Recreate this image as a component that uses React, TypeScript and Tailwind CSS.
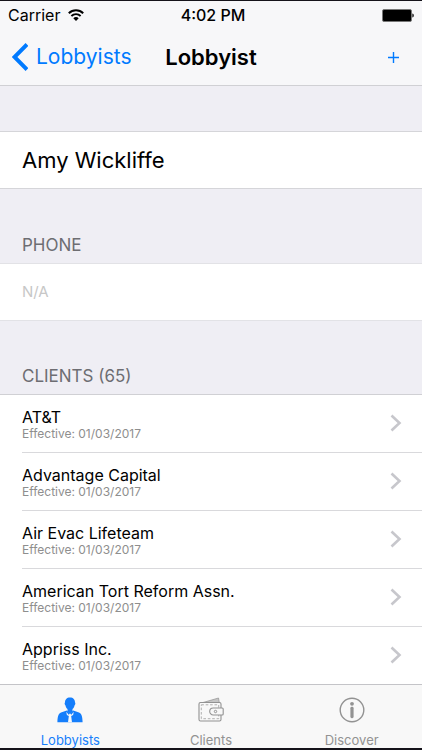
import { useState } from "react";
import type { ReactNode } from "react";

type Client = {
  name: string;
  effective: string;
};

const clients: Client[] = [
  { name: "AT&T", effective: "01/03/2017" },
  { name: "Advantage Capital", effective: "01/03/2017" },
  { name: "Air Evac Lifeteam", effective: "01/03/2017" },
  { name: "American Tort Reform Assn.", effective: "01/03/2017" },
  { name: "Appriss Inc.", effective: "01/03/2017" },
];

const WifiIcon = () => (
  <svg className="w-4 h-3" viewBox="0 0 16 12" fill="none" stroke="#000">
    <path d="M.8 4.3a10.3 10.3 0 0 1 14.4 0" strokeWidth="2" />
    <path d="M3.4 7a6.6 6.6 0 0 1 9.2 0" strokeWidth="1.9" />
    <path d="M8 12 5.3 9.2a3.9 3.9 0 0 1 5.4 0z" fill="#000" stroke="none" />
  </svg>
);

const BatteryIcon = () => (
  <svg className="w-8 h-[13px]" viewBox="0 0 32 13">
    <rect x=".5" y=".5" width="29" height="12" rx="1.5" fill="#000" stroke="#777" />
    <path d="M30.4 4.5c1.8.5 1.8 3.5 0 4z" fill="#000" />
  </svg>
);

const BackIcon = () => (
  <svg className="w-4 h-7" viewBox="0 0 16 28" fill="none">
    <path d="M15 1.5 2.5 14 15 26.5" stroke="#007aff" strokeWidth="4" />
  </svg>
);

const PlusIcon = () => (
  <svg className="w-3 h-3" viewBox="0 0 12 12" fill="none">
    <path d="M6.5 1v11M1 6.5h11" stroke="#007aff" strokeWidth="1.4" />
  </svg>
);

const ChevronIcon = () => (
  <svg className="w-3 h-[18px]" viewBox="0 0 12 18" fill="none">
    <path d="M1.5 1.5 9.5 9l-8 7.5" stroke="#c7c7cc" strokeWidth="2.6" />
  </svg>
);

const LobbyistIcon = () => (
  <svg className="w-[26px] h-[26px]" viewBox="0 0 26 26" fill="currentColor">
    <path d="M13 .5C9.8.5 7.9 2.6 8 5.6c-.7.3-.3 2.5.5 2.800.4 1.7 1.100 2.900 2 3.700v3l2.500 1.500 2.500-1.500v-3c.9-.8 1.600-2 2-3.700.8-.3 1.200-2.500.5-2.800.1-3-1.800-5.100-5-5.100z" />
    <path d="M9.8 13.500 4 15.400C1.700 16.200.6 18.500.4 25.200h25.200c-.2-6.700-1.300-9-3.600-9.800l-5.800-1.900L13 16.500z" />
    <path d="m9.300 14.700 2.300 3 1.400-1.200 1.400 1.200 2.300-3-.5 3.100-1.500 1.300-.6-.5.900 6.600h-4l.9-6.600-.6.500-1.500-1.300z" fill="#f8f8f8" />
  </svg>
);

const WalletIcon = () => (
  <svg className="w-[26px] h-[26px]" viewBox="0 0 26 26" fill="none" stroke="currentColor">
    <path d="M5 5.500 20.500 1l.8 4.500z" fill="currentColor" fillOpacity=".5" strokeWidth=".7" />
    <rect x="1" y="5.500" width="22" height="18.500" rx="1.500" strokeWidth="1.100" />
    <rect x="3.300" y="7.800" width="17.400" height="13.900" strokeWidth=".7" strokeDasharray="2.600 1.800" />
    <path d="M24.200 11h-9a3.500 3.500 0 0 0 0 7h9a1 1 0 0 0 1-1v-5a1 1 0 0 0-1-1z" fill="#f8f8f8" strokeWidth="1.100" />
    <circle cx="17.500" cy="14.500" r="1.200" />
  </svg>
);

const InfoIcon = () => (
  <svg className="w-[26px] h-[26px]" viewBox="0 0 26 26" fill="none">
    <circle cx="13" cy="13" r="11.800" stroke="currentColor" strokeWidth="1.400" />
    <circle cx="13" cy="6.800" r="1.900" fill="currentColor" />
    <rect x="11.400" y="9.800" width="3.200" height="11.400" rx="1.400" fill="currentColor" />
  </svg>
);

const tabs: { label: string; icon: ReactNode }[] = [
  { label: "Lobbyists", icon: <LobbyistIcon /> },
  { label: "Clients", icon: <WalletIcon /> },
  { label: "Discover", icon: <InfoIcon /> },
];

const SectionTitle = ({ children }: { children: ReactNode }) => (
  <h2 className="px-[22px] pb-1.5 text-[17px] leading-6 text-[#6d6d72]">
    {children}
  </h2>
);

const ClientRow = ({ name, effective }: Client) => (
  <li className="pl-[22px]">
    <button
      type="button"
      className="flex w-full h-[58px] items-center justify-between border-b border-[#d9d9dc] pr-5 pb-0.5 text-left"
    >
      <span className="flex flex-col pt-0.5">
        <span className="text-base leading-5 text-black">{name}</span>
        <span className="text-xs leading-[14px] text-[#8e8e8e]">
          Effective: {effective}
        </span>
      </span>
      <ChevronIcon />
    </button>
  </li>
);

const App = () => {
  const [activeTab, setActiveTab] = useState("Lobbyists");

  return (
    <div className="flex h-screen flex-col border-t border-b-2 border-[#15131a] bg-[#efeef4] font-['Inter','Liberation_Sans',sans-serif]">
      <header className="border-b border-[#d0d0d4] bg-[#f7f7f9]">
        <div className="grid h-7 grid-cols-[1fr_auto_1fr] items-center px-2 text-base text-black">
          <span className="flex items-center gap-2">
            Carrier
            <WifiIcon />
          </span>
          <span className="pl-1 font-medium">4:02 PM</span>
          <span className="flex justify-end">
            <BatteryIcon />
          </span>
        </div>
        <nav className="grid h-14 grid-cols-3 items-center">
          <button
            type="button"
            className="flex items-center gap-2 pl-3 text-[21px] text-[#007aff]"
          >
            <BackIcon />
            Lobbyists
          </button>
          <h1 className="text-center text-[22px] font-semibold text-black">
            Lobbyist
          </h1>
          <button
            type="button"
            aria-label="Add"
            className="justify-self-end py-2 pr-[23px]"
          >
            <PlusIcon />
          </button>
        </nav>
      </header>

      <main className="flex-1 overflow-hidden">
        <section className="mt-[45px] border-y border-[#d5d5d9] bg-white px-[22px]">
          <p className="text-[22px] leading-14 text-black">Amy Wickliffe</p>
        </section>

        <section className="pt-11">
          <SectionTitle>PHONE</SectionTitle>
          <p className="border-y border-[#e2e2e6] bg-white px-[22px] text-[15px] leading-14 text-[#c7c7c7]">
            N/A
          </p>
        </section>

        <section className="pt-[43px]">
          <SectionTitle>CLIENTS (65)</SectionTitle>
          <ul className="border-t border-[#d0d0d4] bg-white">
            {clients.map((client) => (
              <ClientRow key={client.name} {...client} />
            ))}
          </ul>
        </section>
      </main>

      <nav className="grid grid-cols-3 border-t border-[#c4c4c8] bg-[#f8f8f8]">
        {tabs.map(({ label, icon }) => (
          <button
            key={label}
            type="button"
            onClick={() => setActiveTab(label)}
            className={`flex h-[63px] flex-col items-center justify-between pt-3 text-[13px] leading-4 ${
              activeTab === label ? "text-[#157efb]" : "text-[#929292]"
            }`}
          >
            {icon}
            {label}
          </button>
        ))}
      </nav>
    </div>
  );
};

export default App;
